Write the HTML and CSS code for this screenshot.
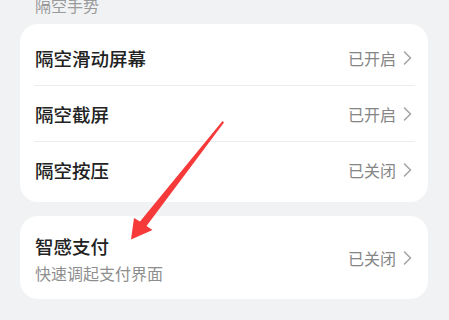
FILE: index.html
```html
<!DOCTYPE html>
<html lang="zh-CN">
<head>
<meta charset="utf-8">
<link rel="stylesheet" href="styles.css">
</head>
<body>
<div class="page">
  <div class="section-title">隔空手势</div>
  <div class="card list">
    <div class="row">
      <span class="title">隔空滑动屏幕</span>
      <span class="status">已开启<svg class="chev" viewBox="0 0 9 14" width="9" height="14"><polyline points="1.5,1 7.5,7 1.5,13" fill="none" stroke="#a3a3a3" stroke-width="1.5" stroke-linecap="round" stroke-linejoin="round"/></svg></span>
    </div>
    <div class="row">
      <span class="title">隔空截屏</span>
      <span class="status">已开启<svg class="chev" viewBox="0 0 9 14" width="9" height="14"><polyline points="1.5,1 7.5,7 1.5,13" fill="none" stroke="#a3a3a3" stroke-width="1.5" stroke-linecap="round" stroke-linejoin="round"/></svg></span>
    </div>
    <div class="row">
      <span class="title">隔空按压</span>
      <span class="status">已关闭<svg class="chev" viewBox="0 0 9 14" width="9" height="14"><polyline points="1.5,1 7.5,7 1.5,13" fill="none" stroke="#a3a3a3" stroke-width="1.5" stroke-linecap="round" stroke-linejoin="round"/></svg></span>
    </div>
  </div>
  <div class="card single">
    <div class="row tall">
      <div class="texts">
        <span class="title">智感支付</span>
        <span class="sub">快速调起支付界面</span>
      </div>
      <span class="status">已关闭<svg class="chev" viewBox="0 0 9 14" width="9" height="14"><polyline points="1.5,1 7.5,7 1.5,13" fill="none" stroke="#a3a3a3" stroke-width="1.5" stroke-linecap="round" stroke-linejoin="round"/></svg></span>
    </div>
  </div>
  <svg class="arrow" viewBox="0 0 449 320" width="449" height="320">
    <polygon points="222.5,124 224,125.5 146.5,229 152.5,233 131,242.5 134,221 140,224.5" fill="#f63a3a"/>
  </svg>
</div>
</body>
</html>
```
FILE: styles.css
```css
html, body {
  margin: 0;
  padding: 0;
  background: #f1f2f4;
}
body {
  font-family: "Noto Sans CJK SC", "Noto Sans", sans-serif;
  width: 449px;
  height: 320px;
  overflow: hidden;
}
.page {
  position: relative;
  padding: 0 21px 0 20px;
}
.section-title {
  font-size: 16px;
  line-height: 16px;
  margin-top: -3px;
  margin-bottom: 11px;
  padding-left: 15px;
  color: #9a9a9a;
}
.card {
  background: #ffffff;
  border-radius: 18px;
}
.list {
  padding: 6px 0 5px;
}
.row {
  display: flex;
  align-items: center;
  justify-content: space-between;
  height: 55px;
  margin: 0 13px 0 14px;
  padding: 0 3px 0 1px;
}
.list .row + .row {
  border-top: 1px solid #ececec;
}
.title {
  font-size: 18.5px;
  font-weight: 500;
  color: #222222;
  line-height: 24px;
}
.status {
  display: flex;
  align-items: center;
  gap: 7px;
  font-size: 16px;
  color: #858585;
}
.chev {
  display: block;
}
.single {
  margin-top: 14px;
  height: 83px;
  display: flex;
  align-items: center;
}
.single .row {
  flex: 1;
  height: auto;
}
.texts {
  display: flex;
  flex-direction: column;
  gap: 5px;
  margin-top: 2px;
}
.sub {
  font-size: 16px;
  line-height: 20px;
  color: #8e8e8e;
}
.arrow {
  position: absolute;
  left: 0;
  top: 0;
  pointer-events: none;
}
```
